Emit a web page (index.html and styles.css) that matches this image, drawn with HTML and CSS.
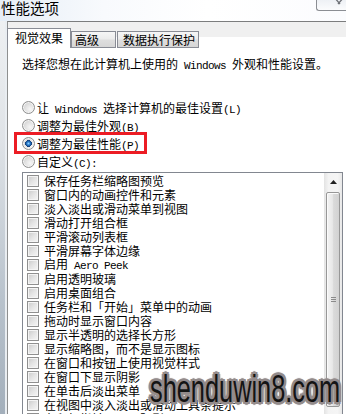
FILE: index.html
```html
<!DOCTYPE html>
<html lang="zh-CN">
<head>
<meta charset="utf-8">
<title>性能选项</title>
<link rel="stylesheet" href="styles.css">
</head>
<body>
<div class="window">
  <div class="titlebar">
    <span class="title">性能选项</span>
    <span class="close"><svg width="30" height="11" viewBox="0 0 30 11"><path d="M17 -3 L23 4 M27 -3 L21 4" stroke="#6f7277" stroke-width="1.3" fill="none"/></svg></span>
  </div>
  <div class="body">
    <div class="frame-left"></div>
    <div class="dialog">
      <div class="tabs">
        <div class="tab active">视觉效果</div>
        <div class="tab t2">高级</div>
        <div class="tab t3">数据执行保护</div>
      </div>
      <div class="page">
        <p class="intro">选择您想在此计算机上使用的<span class="lat"> Windows </span>外观和性能设置。</p>
        <div class="radios">
          <div class="radio"><span class="rb"></span><span>让<span class="lat"> Windows </span>选择计算机的最佳设置<span class="lat">(L)</span></span></div>
          <div class="radio"><span class="rb"></span><span>调整为最佳外观<span class="lat">(B)</span></span></div>
          <div class="radio sel"><span class="rb on"></span><span>调整为最佳性能<span class="lat">(P)</span></span></div>
          <div class="radio"><span class="rb"></span><span>自定义<span class="lat">(C):</span></span></div>
        </div>
        <div class="listbox">
          <ul class="items">
            <li><span class="cb"></span>保存任务栏缩略图预览</li>
            <li><span class="cb"></span>窗口内的动画控件和元素</li>
            <li><span class="cb"></span>淡入淡出或滑动菜单到视图</li>
            <li><span class="cb"></span>滑动打开组合框</li>
            <li><span class="cb"></span>平滑滚动列表框</li>
            <li><span class="cb"></span>平滑屏幕字体边缘</li>
            <li><span class="cb"></span><span>启用<span class="lat"> Aero Peek</span></span></li>
            <li><span class="cb"></span>启用透明玻璃</li>
            <li><span class="cb"></span>启用桌面组合</li>
            <li><span class="cb"></span>任务栏和「开始」菜单中的动画</li>
            <li><span class="cb"></span>拖动时显示窗口内容</li>
            <li><span class="cb"></span>显示半透明的选择长方形</li>
            <li><span class="cb"></span>显示缩略图，而不是显示图标</li>
            <li><span class="cb"></span>在窗口和按钮上使用视觉样式</li>
            <li><span class="cb"></span>在窗口下显示阴影</li>
            <li><span class="cb"></span>在单击后淡出菜单</li>
            <li><span class="cb"></span>在视图中淡入淡出或滑动工具条提示</li>
            <li><span class="cb"></span>在鼠标指针下显示阴影</li>
          </ul>
          <div class="scrollbar">
            <div class="sb-up"><svg width="7" height="4" viewBox="0 0 7 4"><path d="M0 4 L3.5 0 L7 4 Z" fill="#222"/></svg></div>
            <div class="thumb"><svg width="5" height="6" viewBox="0 0 5 6"><path d="M0 0.5 H5 M0 2.5 H5 M0 4.5 H5" stroke="#8a8a8a" stroke-width="1"/></svg></div>
          </div>
        </div>
      </div>
    </div>
  </div>
  <div class="watermark">shenduwin8.com</div>
</div>
</body>
</html>
```
FILE: styles.css
```css
body {
  margin: 0;
  width: 346px;
  height: 414px;
  overflow: hidden;
  background: #fff;
  color: #000;
  font-family: "Noto Sans CJK SC", "Noto Sans", sans-serif;
  font-size: 12px;
}

.window {
  position: relative;
  height: 414px;
  overflow: hidden;
}

.titlebar {
  height: 21px;
  display: flex;
  justify-content: space-between;
  align-items: flex-start;
  background: linear-gradient(to right, #e6eef7 0, #f8fafd 30%, #ffffff 60%, #fbfcfe 100%);
}

.title {
  padding-left: 1px;
  font-size: 14.5px;
  line-height: 18px;
  margin-top: -1px;
}

.close {
  width: 30px;
  height: 11px;
  box-sizing: border-box;
  border: 1px solid #8b8e93;
  border-top: 0;
  border-right: 0;
  border-radius: 0 0 0 3px;
  background: linear-gradient(#eef1f5, #fbfcfd);
  overflow: hidden;
}

.close svg {
  display: block;
}

.body {
  display: flex;
  height: 393px;
}

.frame-left {
  width: 7px;
  background: linear-gradient(to bottom, #eef0f2 0, #dfe3e7 30%, #b9c3cd 70%, #a3afbb 100%);
  box-shadow: inset -2px 0 0 #e9edf1;
}

.dialog {
  flex: 1;
  border-top: 1px solid #7c7d7e;
  border-left: 1px solid #8e8f8f;
  background: linear-gradient(#f0f0f0 0, #f0f0f0 15px, #ffffff 15px);
}

.tabs {
  display: flex;
  align-items: flex-end;
  height: 26px;
}

.tab {
  box-sizing: border-box;
  border: 1px solid #898c95;
  white-space: nowrap;
}

.tab.active {
  margin-left: -1px;
  width: 64px;
  height: 20px;
  padding-left: 7px;
  border-bottom: 0;
  background: #fff;
  line-height: 17px;
}

.tab.t2,
.tab.t3 {
  height: 17px;
  line-height: 15px;
  background: linear-gradient(#f6f6f6 0, #ececec 45%, #dedede 55%, #d6d6d6 100%);
}

.tab.t2 {
  width: 45px;
  padding-left: 3px;
}

.tab.t3 {
  margin-left: 1px;
  width: 82px;
  padding-left: 5px;
}

.page {
  padding: 9px 0 0 14px;
}

.lat {
  font-family: "Liberation Mono", monospace;
  font-size: 11px;
  letter-spacing: -0.6px;
  white-space: pre;
}

.intro {
  margin: 0;
  line-height: 14px;
  white-space: nowrap;
}

.radios {
  margin-top: 25px;
}

.radio {
  position: relative;
  display: flex;
  align-items: center;
  gap: 2px;
  height: 18px;
  white-space: nowrap;
}

.radio.sel::after {
  content: "";
  position: absolute;
  left: -8px;
  top: -2px;
  width: 133px;
  height: 22px;
  box-sizing: border-box;
  border: 3px solid #ec1c24;
}

.rb {
  width: 13px;
  height: 13px;
  box-sizing: border-box;
  border-radius: 50%;
  border: 1px solid #8e8f8f;
  background: radial-gradient(circle at 65% 65%, #f7f7f7 0, #e2e2e2 45%, #c6c6c6 100%);
  box-shadow: inset 0 0 0 1px #f4f4f4;
  flex: none;
}

.rb.on {
  background:
    radial-gradient(circle at 50% 50%, #8fd0ff 0, #2a7fd0 1.6px, #123f7a 3.2px, transparent 3.6px),
    radial-gradient(circle at 65% 65%, #f7f7f7 0, #e2e2e2 45%, #c6c6c6 100%);
}

.listbox {
  margin-top: 2px;
  display: flex;
  width: 321px;
  height: 244px;
  box-sizing: border-box;
  border: 1px solid #828790;
  border-bottom: 0;
  background: #fff;
  overflow: hidden;
}

.items {
  flex: 1;
  list-style: none;
  margin: 0;
  padding: 1px 0 0 4px;
  overflow: hidden;
}

.items li {
  display: flex;
  align-items: center;
  gap: 5px;
  height: 14px;
  line-height: 14px;
  white-space: nowrap;
}

.cb {
  width: 12px;
  height: 12px;
  box-sizing: border-box;
  border: 1px solid #8f8f8f;
  background: linear-gradient(135deg, #c9c9c9 0, #e4e4e4 50%, #f6f6f6 100%);
  box-shadow: inset 0 0 0 1px #f4f4f4;
  flex: none;
}

.scrollbar {
  width: 18px;
  display: flex;
  flex-direction: column;
  align-items: center;
  background: linear-gradient(to right, #e3e3e3 0, #f3f3f3 25%, #f5f5f5 75%, #e8e8e8 100%);
}

.sb-up {
  height: 18px;
  width: 18px;
  display: flex;
  align-items: center;
  justify-content: center;
}

.sb-up svg {
  display: block;
}

.thumb {
  margin-top: 1px;
  width: 14px;
  height: 215px;
  box-sizing: border-box;
  border: 1px solid #979797;
  border-radius: 2px;
  background: linear-gradient(to right, #f4f4f4 0, #e8e8e8 45%, #dadada 55%, #d2d2d2 100%);
  box-shadow: inset 1px 1px 0 #fbfbfb;
  display: flex;
  align-items: center;
  justify-content: center;
}

.thumb svg {
  display: block;
}

.watermark {
  position: absolute;
  left: 150px;
  top: 369px;
  font-family: "Liberation Sans", Arial, sans-serif;
  font-size: 38px;
  line-height: 40px;
  color: #141414;
  white-space: nowrap;
  transform: scaleX(0.667);
  transform-origin: 0 0;
  text-shadow:
    3px 0 0 #938b8b, -3px 0 0 #938b8b, 0 2px 0 #938b8b, 0 -2px 0 #938b8b,
    3px 2px 0 #938b8b, -3px 2px 0 #938b8b, 3px -2px 0 #938b8b, -3px -2px 0 #938b8b,
    0 3px 1px #9a9292, 0 -3px 1px #9a9292, 4px 0 1px #9a9292, -4px 0 1px #9a9292;
}
```
